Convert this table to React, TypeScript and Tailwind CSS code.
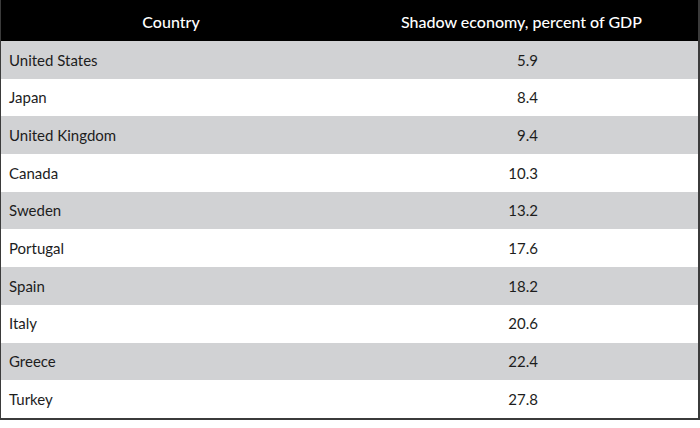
import React from 'react';

const rows = [
  ['United States', '5.9'],
  ['Japan', '8.4'],
  ['United Kingdom', '9.4'],
  ['Canada', '10.3'],
  ['Sweden', '13.2'],
  ['Portugal', '17.6'],
  ['Spain', '18.2'],
  ['Italy', '20.6'],
  ['Greece', '22.4'],
  ['Turkey', '27.8'],
];

const App = () => {
  return (
    <div className="w-[700px] h-[428px] bg-white" style={{ fontFamily: 'Lato, "Open Sans", sans-serif' }}>
      <div className="border-l border-r-2 border-b-2 border-[#3b3b3b]">
        <div className="grid grid-cols-[340px_1fr] h-[41px] bg-black text-white text-[16px] font-medium items-center pt-[2px]">
          <div className="text-center">Country</div>
          <div className="text-center pl-[4px]">Shadow economy, percent of GDP</div>
        </div>
        {rows.map(([country, value], i) => (
          <div
            key={country}
            className={`grid grid-cols-[340px_1fr] h-[37.7px] items-center text-[15px] text-[#1d1d1d] ${
              i % 2 === 0 ? 'bg-[#d1d2d4]' : 'bg-white'
            }`}
          >
            <div className="pl-2">{country}</div>
            <div className="w-[197px] text-right">{value}</div>
          </div>
        ))}
      </div>
    </div>
  );
};

export default App;
